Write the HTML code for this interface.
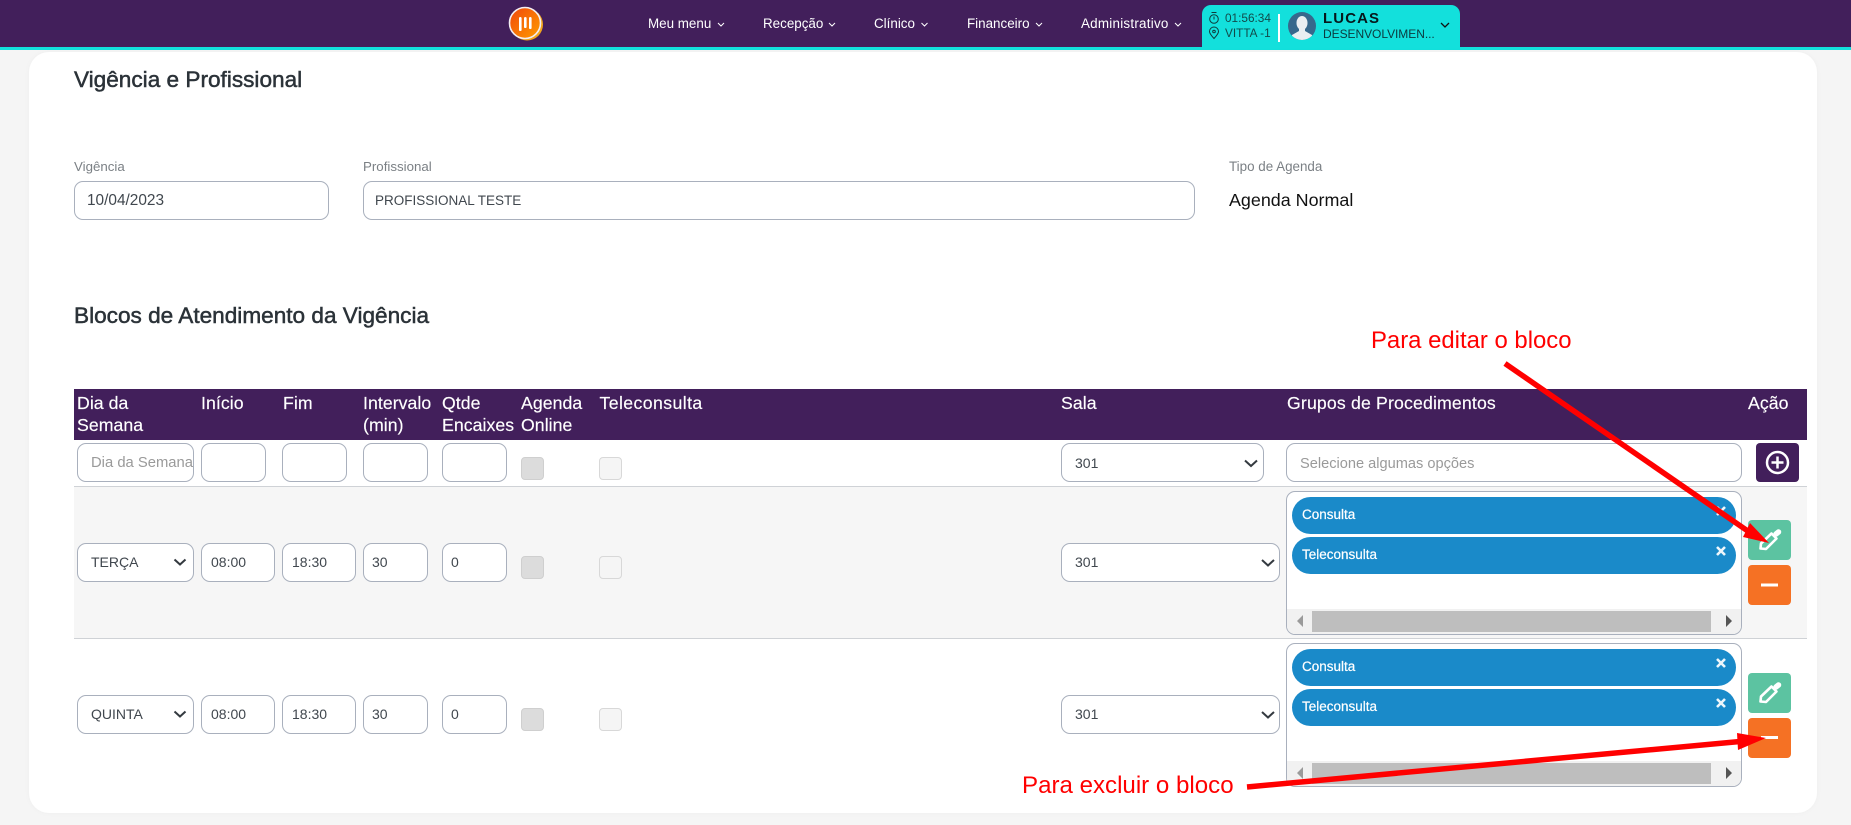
<!DOCTYPE html>
<html lang="pt-BR">
<head>
<meta charset="utf-8">
<title>Vigência e Profissional</title>
<style>
html,body{margin:0;padding:0;background:#f5f5f5;}
body{position:relative;width:1851px;height:825px;overflow:hidden;font-family:"Liberation Sans",Arial,sans-serif;}
.a{position:absolute;box-sizing:border-box;}
.t{position:absolute;white-space:nowrap;}
.nav{color:#fff;font-size:13.4px;height:20px;line-height:20px;top:14px;}
.h{color:#fff;font-size:17.7px;height:22px;line-height:22px;letter-spacing:.05px;-webkit-text-stroke:.15px #fff;}
.i{position:absolute;box-sizing:border-box;background:#fff;border:1px solid #a9b0bd;border-radius:9px;height:39px;color:#40474e;font-size:14px;line-height:37px;white-space:nowrap;overflow:hidden;}
.cb{position:absolute;box-sizing:border-box;width:23px;height:23px;border-radius:4px;}
.c1{background:#dcdcdc;border:1px solid #cfcfcf;left:521px;}
.c2{background:#f5f5f5;border:1px solid #d8d8d8;left:599px;}
.chip{position:absolute;left:1292px;width:444px;height:37px;border-radius:19px;background:#1a8ac9;color:#fff;}
.chip span{position:absolute;left:10px;top:8px;line-height:20px;font-size:13.5px;-webkit-text-stroke:.2px #fff;}
.btn{position:absolute;left:1748px;width:43px;height:40px;border-radius:4px;}
.sec{position:absolute;left:74px;width:1733px;height:1px;background:#cfd2d6;}
</style>
</head>
<body>
<!-- header -->
<div class="a" style="left:0;top:0;width:1851px;height:47px;background:#421f5b;"></div>
<div class="a" style="left:0;top:47px;width:1851px;height:3px;background:#13e0dc;"></div>
<svg class="a" style="left:505px;top:3px" width="42" height="40" viewBox="0 0 42 40">
<defs><linearGradient id="g" x1="0" y1="0" x2="1" y2="1"><stop offset="0" stop-color="#f0460a"/><stop offset="1" stop-color="#ff9d00"/></linearGradient></defs>
<circle cx="22" cy="21.5" r="16" fill="#f2a51c"/>
<circle cx="20" cy="20" r="15.5" fill="url(#g)" stroke="#f3eef3" stroke-width="1.6"/>
<rect x="14" y="14" width="2.6" height="14" rx="1.3" fill="#fff"/>
<rect x="19" y="14" width="2.6" height="11" rx="1.3" fill="#fff"/>
<rect x="24" y="14" width="2.6" height="12" rx="1.3" fill="#fff"/>
</svg>
<div class="t nav" style="left:648px">Meu menu</div>
<div class="t nav" style="left:763px">Recepção</div>
<div class="t nav" style="left:874px">Clínico</div>
<div class="t nav" style="left:967px">Financeiro</div>
<div class="t nav" style="left:1081px;letter-spacing:.25px">Administrativo</div>
<svg class="a" style="left:0;top:0" width="1851" height="50" fill="none" stroke="#fff" stroke-width="1">
<path d="M718 23l3 3 3-3M829 23l3 3 3-3M921.500 23l3 3 3-3M1036 23l3 3 3-3M1175 23l3 3 3-3"/>
</svg>
<div class="a" style="left:1202px;top:5px;width:258px;height:45px;background:#13e0dc;border-radius:9px 9px 0 0;"></div>
<svg class="a" style="left:1202px;top:5px" width="258" height="45" fill="none" stroke="#0f3a3a" stroke-width="1">
<circle cx="12" cy="14" r="4.3"/><path d="M9.5 7.500h5M12 11.500v3"/>
<path d="M12 33.500c-3-3.200-4.500-5-4.500-7a4.500 4.500 0 0 1 9 0c0 2-1.500 3.800-4.500 7z"/><circle cx="12" cy="26.500" r="1.300"/>
<path d="M239 18l4 4 4-4" stroke="#111" stroke-width="1.300"/>
</svg>
<div class="t" style="left:1225px;top:10px;height:16px;line-height:16px;font-size:11.800px;color:#124a4a;">01:56:34</div>
<div class="t" style="left:1225px;top:25px;height:16px;line-height:16px;font-size:11.800px;color:#124a4a;">VITTA -1</div>
<div class="a" style="left:1278px;top:14px;width:2px;height:28px;background:#fff;"></div>
<svg class="a" style="left:1288px;top:12px" width="28" height="28" viewBox="0 0 28 28">
<defs><clipPath id="av"><circle cx="14" cy="14" r="14"/></clipPath></defs>
<circle cx="14" cy="14" r="14" fill="#36688c"/>
<g clip-path="url(#av)" fill="#e9eef1"><ellipse cx="14" cy="11" rx="5.500" ry="7"/><path d="M11 16h6v3l7 4v6H4v-6l7-4z"/></g>
</svg>
<div class="t" style="left:1323px;top:10px;height:18px;line-height:18px;font-size:15px;font-weight:bold;letter-spacing:1.100px;color:#06181c;">LUCAS</div>
<div class="t" style="left:1323px;top:26px;height:16px;line-height:16px;font-size:12px;letter-spacing:-.05px;color:#0c3a3e;">DESENVOLVIMEN...</div>

<!-- card -->
<div class="a" style="left:29px;top:52px;width:1788px;height:761px;background:#fff;border-radius:20px;box-shadow:0 0 6px rgba(0,0,0,.03);"></div>

<div class="t" style="left:74px;top:65px;height:30px;line-height:30px;font-size:22.600px;color:#2b3238;-webkit-text-stroke:.5px #2b3238;">Vigência e Profissional</div>
<div class="t" style="left:74px;top:301px;height:30px;line-height:30px;font-size:22.600px;color:#2b3238;-webkit-text-stroke:.5px #2b3238;">Blocos de Atendimento da Vigência</div>

<div class="t" style="left:74px;top:157px;height:20px;line-height:20px;font-size:13.300px;color:#7b8085;">Vigência</div>
<div class="t" style="left:363px;top:157px;height:20px;line-height:20px;font-size:13.300px;color:#7b8085;">Profissional</div>
<div class="t" style="left:1229px;top:157px;height:20px;line-height:20px;font-size:13.400px;color:#7b8085;">Tipo de Agenda</div>
<div class="i" style="left:74px;top:181px;width:255px;padding-left:12px;font-size:15.400px;">10/04/2023</div>
<div class="i" style="left:363px;top:181px;width:832px;padding-left:11px;font-size:13.500px;">PROFISSIONAL TESTE</div>
<div class="t" style="left:1229px;top:188px;height:24px;line-height:24px;font-size:17.900px;color:#111;">Agenda Normal</div>

<!-- table header -->
<div class="a" style="left:74px;top:389px;width:1733px;height:51px;background:#421f5b;"></div>
<div class="t h" style="left:77px;top:392px">Dia da</div>
<div class="t h" style="left:77px;top:414px">Semana</div>
<div class="t h" style="left:201px;top:392px">Início</div>
<div class="t h" style="left:283px;top:392px">Fim</div>
<div class="t h" style="left:363px;top:392px">Intervalo</div>
<div class="t h" style="left:363px;top:414px">(min)</div>
<div class="t h" style="left:442px;top:392px">Qtde</div>
<div class="t h" style="left:442px;top:414px">Encaixes</div>
<div class="t h" style="left:521px;top:392px">Agenda</div>
<div class="t h" style="left:521px;top:414px">Online</div>
<div class="t h" style="left:599.500px;top:392px;letter-spacing:.4px">Teleconsulta</div>
<div class="t h" style="left:1061px;top:392px">Sala</div>
<div class="t h" style="left:1287px;top:392px;letter-spacing:.15px">Grupos de Procedimentos</div>
<div class="t h" style="left:1748px;top:392px">Ação</div>

<!-- row 1 -->
<div class="i" style="left:77px;top:443px;width:117px;padding-left:13px;padding-top:1px;color:#9a9a9a;font-size:14.800px;">Dia da Semana</div>
<div class="i" style="left:201px;top:443px;width:65px;"></div>
<div class="i" style="left:282px;top:443px;width:65px;"></div>
<div class="i" style="left:363px;top:443px;width:65px;"></div>
<div class="i" style="left:442px;top:443px;width:65px;"></div>
<div class="cb c1" style="top:457px"></div>
<div class="cb c2" style="top:457px"></div>
<div class="i" style="left:1061px;top:443px;width:203px;padding-left:13px;padding-top:1px;">301</div>
<div class="i" style="left:1286px;top:443px;width:456px;padding-left:13px;padding-top:2px;color:#9a9a9a;font-size:14.600px;">Selecione algumas opções</div>
<div class="a" style="left:1756px;top:443px;width:43px;height:39px;background:#421f5b;border-radius:4px;"></div>
<svg class="a" style="left:1764px;top:449px" width="27" height="27" fill="none" stroke="#fff" stroke-width="2.500"><circle cx="13.500" cy="13.500" r="10.500"/><path d="M13.500 7.500v12M7.500 13.500h12"/></svg>
<div class="sec" style="top:486px"></div>

<!-- row 2 -->
<div class="a" style="left:74px;top:487px;width:1733px;height:151px;background:#f6f6f6;"></div>
<div class="sec" style="top:638px"></div>

<div class="i" style="left:77px;top:543px;width:117px;padding-left:13px;">TERÇA</div>
<div class="i" style="left:201px;top:543px;width:74px;padding-left:9px;">08:00</div>
<div class="i" style="left:282px;top:543px;width:74px;padding-left:9px;">18:30</div>
<div class="i" style="left:363px;top:543px;width:65px;padding-left:8px;">30</div>
<div class="i" style="left:442px;top:543px;width:65px;padding-left:8px;">0</div>
<div class="cb c1" style="top:556px"></div>
<div class="cb c2" style="top:556px"></div>
<div class="i" style="left:1061px;top:543px;width:219px;padding-left:13px;">301</div>

<div class="a" style="left:1286px;top:491px;width:456px;height:144px;background:#fff;border:1px solid #a9b0bd;border-radius:9px;"></div>
<div class="chip" style="top:497px"><span>Consulta</span></div>
<div class="chip" style="top:537px"><span>Teleconsulta</span></div>
<div class="a" style="left:1287px;top:609px;width:454px;height:25px;background:#f1f1f1;border-radius:0 0 8px 8px;"></div>
<div class="a" style="left:1312px;top:611px;width:399px;height:21px;background:#bebebe;"></div>
<div class="btn" style="top:520px;background:#5cc3a1;"></div>
<div class="btn" style="top:565px;background:#f57124;"></div>

<!-- row 3 -->
<div class="i" style="left:77px;top:695px;width:117px;padding-left:13px;">QUINTA</div>
<div class="i" style="left:201px;top:695px;width:74px;padding-left:9px;">08:00</div>
<div class="i" style="left:282px;top:695px;width:74px;padding-left:9px;">18:30</div>
<div class="i" style="left:363px;top:695px;width:65px;padding-left:8px;">30</div>
<div class="i" style="left:442px;top:695px;width:65px;padding-left:8px;">0</div>
<div class="cb c1" style="top:708px"></div>
<div class="cb c2" style="top:708px"></div>
<div class="i" style="left:1061px;top:695px;width:219px;padding-left:13px;">301</div>

<div class="a" style="left:1286px;top:643px;width:456px;height:144px;background:#fff;border:1px solid #a9b0bd;border-radius:9px;"></div>
<div class="chip" style="top:649px"><span>Consulta</span></div>
<div class="chip" style="top:689px"><span>Teleconsulta</span></div>
<div class="a" style="left:1287px;top:761px;width:454px;height:25px;background:#f1f1f1;border-radius:0 0 8px 8px;"></div>
<div class="a" style="left:1312px;top:763px;width:399px;height:21px;background:#bebebe;"></div>
<div class="btn" style="top:673px;background:#5cc3a1;"></div>
<div class="btn" style="top:718px;background:#f57124;"></div>

<!-- small icons, chevrons, arrows -->
<svg class="a" style="left:0;top:0" width="1851" height="825" fill="none">
<g stroke="#343a40" stroke-width="2">
<path d="M174.500 559.500l5.500 5 5.500-5M174.500 711.500l5.500 5 5.500-5"/>
<path d="M1245 460.500l6 5.500 6-5.500M1262 560l6 5.500 6-5.500M1262 712l6 5.500 6-5.500"/>
</g>
<g fill="#9a9a9a"><path d="M1303 615v12l-6-6zM1303 767v12l-6-6z"/></g>
<g fill="#555"><path d="M1726 615v12l6-6zM1726 767v12l6-6z"/></g>
<g stroke="#eef6fb" stroke-width="2.600">
<path d="M1717 507l8 8M1725 507l-8 8M1717 547l8 8M1725 547l-8 8M1717 659l8 8M1725 659l-8 8M1717 699l8 8M1725 699l-8 8"/>
</g>
<g stroke="#fff">
<path d="M1760.500 701.500l.5-5 10.500-10 5 5-10.500 10.500z" stroke-width="2.600" stroke-linejoin="round"/>
<path d="M1776 687l2.500-2" stroke-width="5.500" stroke-linecap="round"/>
</g>
<g transform="translate(0,-153)" stroke="#fff">
<path d="M1760.500 701.500l.5-5 10.500-10 5 5-10.500 10.500z" stroke-width="2.600" stroke-linejoin="round"/>
<path d="M1776 687l2.500-2" stroke-width="5.500" stroke-linecap="round"/>
</g>
<path d="M1761 585h17M1761 737.500h17" stroke="#fff" stroke-width="3"/>
<!-- red arrows -->
<path d="M1505 363.500L1755 536" stroke="#f00" stroke-width="5.500"/>
<path d="M1769 543L1750 523L1743 537z" fill="#f00"/>
<path d="M1247 787L1740 741.500" stroke="#f00" stroke-width="5.500"/>
<path d="M1766 738L1737 733L1738 750z" fill="#f00"/>
</svg>
<div class="t" style="left:1371px;top:327px;height:28px;line-height:28px;font-size:23.900px;color:#f00;">Para editar o bloco</div>
<div class="t" style="left:1022px;top:772px;height:28px;line-height:28px;font-size:24.100px;color:#f00;">Para excluir o bloco</div>
</body>
</html>
